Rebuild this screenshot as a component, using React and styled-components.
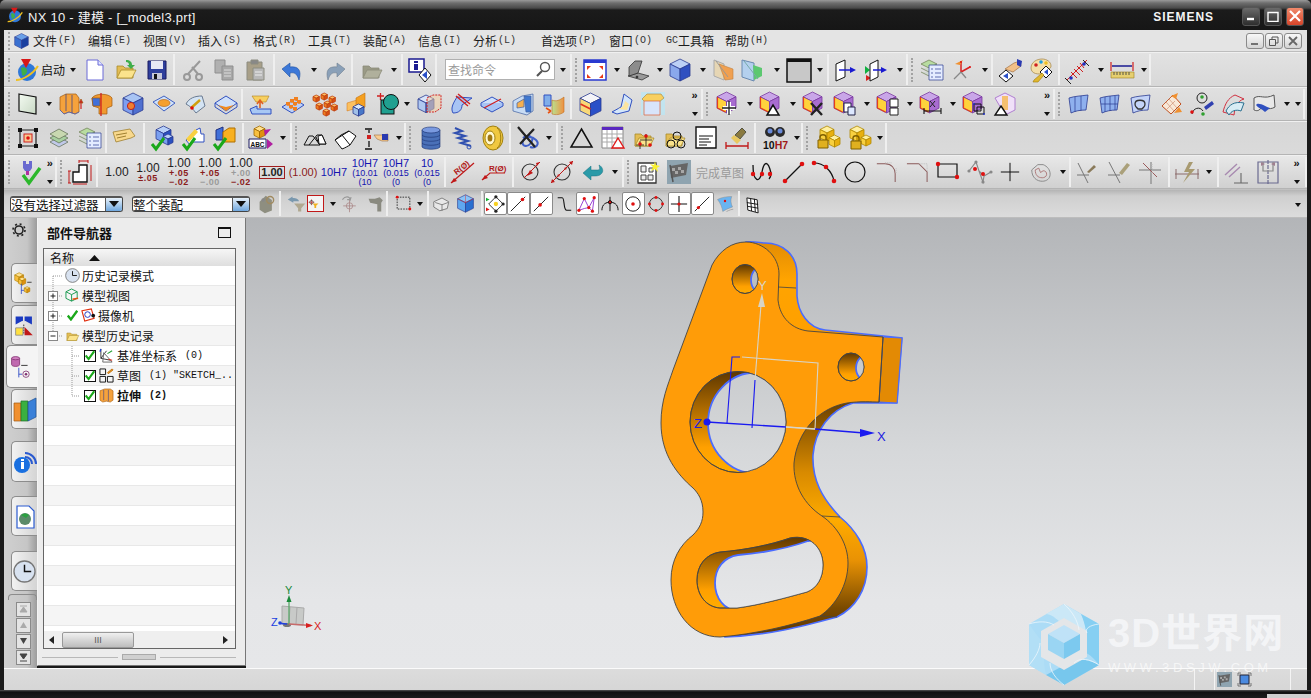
import React from 'react';
import styled, { createGlobalStyle } from 'styled-components';

const Global = createGlobalStyle`
  html, body { margin: 0; padding: 0; background: #1a1a1a; overflow: hidden; }
  * { box-sizing: border-box; }
`;
const CJK = `"Liberation Sans", "Noto Sans CJK SC", sans-serif`;

const Win = styled.div`width:1311px;height:698px;display:flex;flex-direction:column;background:#1a1a1a;position:relative;overflow:hidden;font-family:${CJK};color:#111;`;
const TitleBar = styled.div`height:30px;flex:none;display:flex;align-items:center;padding:0 7px 0 7px;color:#f2f2f2;font-size:13px;background:linear-gradient(#9a9a9a 0,#6e6e6e 3px,#4a4a4a 8px,#1b1b1b 10px,#161616 100%);border-radius:5px 5px 0 0;`;
const TitleText = styled.span`margin-left:5px;margin-top:2px;letter-spacing:.25px;flex:1;`;
const Brand = styled.span`font-weight:700;font-size:12px;letter-spacing:.95px;color:#f4f4f4;margin:3px 24px 0 0;`;
const WinBtn = styled.div`width:18px;height:19px;margin:2px 0 0 4px;border-radius:3px;display:flex;align-items:center;justify-content:center;border:1px solid #555;background:${p=>p.$close?'linear-gradient(#f08a6c,#d8452a)':'linear-gradient(#6a6a6a,#2e2e2e)'};`;
const Frame = styled.div`flex:1;display:flex;flex-direction:column;margin:0 4px;min-height:0;`;

const MenuBar = styled.div`height:22px;flex:none;display:flex;align-items:center;background:#e4e4e4;padding-left:4px;border-bottom:1px solid #bdbdbd;font-size:12px;`;
const MenuGrip = styled.div`width:3px;height:18px;border-left:2px dotted #a8a8a8;margin-right:2px;`;
const MenuIcon = styled.div`width:15px;height:16px;margin:0 4px 0 1px;`;
const MenuItem = styled.span`display:flex;align-items:center;white-space:nowrap;width:${p=>p.$w||41}px;margin-left:${p=>p.$ml??14}px;color:#1c1c1c;`;
const Key = styled.span`font:10px "Liberation Mono",monospace;margin-left:1px;color:#333;`;
const MdiBtns = styled.div`margin-left:auto;display:flex;gap:1px;padding-right:5px;`;
const MdiBtn = styled.div`width:18px;height:16px;border:1px solid #8a8a8a;border-radius:3px;background:linear-gradient(#f8f8f8,#d4d4d4);display:flex;align-items:center;justify-content:center;`;

const Row = styled.div`flex:none;height:${p=>p.$h}px;display:flex;padding-left:1px;background:${p=>p.$bg};border-top:1px solid ${p=>p.$top||'#f0f0f0'};border-bottom:1px solid ${p=>p.$bot||'#b4b4b4'};`;
const Group = styled.div`flex:none;width:${p=>p.$w}px;display:flex;align-items:center;position:relative;border-right:${p=>p.$open?'0':'2px solid #efefef'};margin:1px 0;`;
const Grip = styled.div`flex:none;width:${p=>p.$w}px;height:24px;padding-left:3px;display:flex;&::before{content:"";width:3px;border-left:2px dotted #a2a2a2;}`;
const Btn = styled.div`flex:none;width:${p=>p.$w}px;height:26px;display:flex;align-items:center;justify-content:center;`;
const Box = styled.div`flex:none;width:23px;height:23px;display:flex;align-items:center;justify-content:center;background:${p=>p.$box?'#fff':'transparent'};border:1px solid ${p=>p.$box?'#8a8a8a':'transparent'};border-radius:2px;`;
const RedBox = styled.div`flex:none;width:17px;height:17px;display:flex;align-items:center;justify-content:center;background:#f4f4f4;border:1.5px solid #c01818;`;
const Caret = styled.div`flex:none;width:${p=>p.$w||12}px;height:24px;display:flex;align-items:center;justify-content:center;&::before{content:"";border:3.5px solid transparent;border-top:4px solid #111;border-bottom:0;}`;
const Space = styled.div`flex:none;width:${p=>p.$w}px;`;
const Stack = styled.div`flex:none;width:${p=>p.$w||12}px;height:30px;display:flex;flex-direction:column;align-items:center;justify-content:space-between;padding:1px 0 3px;font:bold 11px "Liberation Sans",sans-serif;line-height:11px;&::after{content:"";border:3.5px solid transparent;border-top:4px solid #111;border-bottom:0;}`;
const Label = styled.div`flex:none;width:${p=>p.$w}px;font-size:12px;text-align:center;color:${p=>p.$c||'#111'};white-space:nowrap;`;
const Search = styled.div`flex:none;width:110px;height:21px;background:#fff;border:1px solid #b0b0b0;display:flex;align-items:center;justify-content:space-between;padding:0 2px 0 2px;font-size:12px;color:#9a9a9a;`;
const Dim = styled.div`flex:none;width:31px;display:flex;flex-direction:column;align-items:center;font:12px "Liberation Sans",sans-serif;line-height:12px;color:${p=>p.$c||'#222'};`;
const DimSmall = styled.span`font-size:11px;`;
const DimSub = styled.span`font:${p=>p.$thin?'':'bold '}9px "Liberation Sans",sans-serif;line-height:9px;letter-spacing:${p=>p.$thin?'0':'.5px'};white-space:nowrap;color:${p=>p.$c||'#8a1c1c'};`;
const DimBox = styled.span`border:1.5px solid #a01c1c;padding:0 1px;font-size:11px;line-height:11px;font-weight:700;`;
const Sel = styled.div`flex:none;width:${p=>p.$w}px;margin-left:${p=>p.$ml}px;height:16px;display:flex;align-items:center;background:#fff;border:1px solid #444;border-top:2px solid #555;border-radius:3px;font-size:12.5px;justify-content:space-between;overflow:hidden;`;
const SelBtn = styled.div`width:17px;height:100%;display:flex;align-items:center;justify-content:center;background:linear-gradient(#e8f2fb,#6fa7de);border-left:1px solid #555;&::before{content:"";border:5px solid transparent;border-top:6px solid #111;border-bottom:0;}`;

const Main = styled.div`flex:1;display:flex;min-height:0;`;
const Rail = styled.div`width:33px;flex:none;display:flex;flex-direction:column;align-items:flex-end;background:linear-gradient(90deg,#d0d0d0,#c6c6c6 70%,#9c9c9c);`;
const Gear = styled.div`width:30px;height:22px;margin-top:3px;display:flex;justify-content:center;align-self:flex-start;`;
const Tab = styled.div`height:${p=>p.$h||40}px;width:${p=>p.$active?31:26}px;margin-top:${p=>p.$mt||0}px;border:1px solid #8c8c8c;border-right:0;border-radius:5px 0 0 5px;display:flex;align-items:center;justify-content:center;background:${p=>p.$active?'#f4f4f4':'linear-gradient(90deg,#f2f2f2,#d4d4d4)'};`;
const Notch = styled.div`width:29px;height:6px;margin-top:3px;border:1px solid #8c8c8c;border-bottom:0;border-radius:4px 4px 0 0;align-self:flex-end;`;
const ScrollBtn = styled.div`width:15px;height:15px;margin:${p=>p.$mt||1}px 6px 0 0;background:#e4e4e4;border:1px solid #8a8a8a;display:flex;align-items:center;justify-content:center;`;

const Panel = styled.div`width:209px;flex:none;background:#ececec;border-right:1px solid #777;border-bottom:1px solid #777;margin-bottom:2px;padding:0 0 0 5px;display:flex;flex-direction:column;border-left:1px solid #f4f4f4;`;
const PanelHead = styled.div`height:30px;flex:none;display:flex;align-items:center;justify-content:space-between;padding:0 14px 2px 4px;font-weight:700;font-size:13px;`;
const MaxBox = styled.div`width:13px;height:11px;border:1.5px solid #111;border-top-width:2px;`;
const TreeBox = styled.div`width:193px;height:401px;flex:none;background:#fff;border:1px solid #666;display:flex;flex-direction:column;overflow:hidden;`;
const TreeHead = styled.div`height:17px;flex:none;background:linear-gradient(#f6f6f6,#dedede);display:flex;align-items:center;padding-left:6px;font-size:12px;gap:15px;`;
const TreeRows = styled.div`flex:1;overflow:hidden;`;
const TreeRow = styled.div`height:20px;display:flex;align-items:center;background:${p=>p.$alt?'#f5f5f5':'#fff'};border-bottom:1px solid #e8e8e8;font-size:12px;white-space:nowrap;overflow:hidden;font-weight:${p=>p.$bold?700:400};`;
const Mono = styled.span`font:${p=>p.$bold?'bold ':''}10px "Liberation Mono",monospace;margin-left:8px;`;
const HBar = styled.div`height:17px;flex:none;display:flex;align-items:center;background:#efefef;padding:0 7px 0 5px;`;
const Thumb = styled.div`width:72px;height:16px;margin:0 auto 0 8px;border:1px solid #999;border-radius:2px;background:linear-gradient(#f0f0f0,#bdbdbd);display:flex;align-items:center;justify-content:center;font-size:9px;color:#555;`;
const Tri = styled.div`border:4px solid transparent;${p=>p.$r?'border-left:5px solid #222;border-right:0;':'border-right:5px solid #222;border-left:0;'}`;
const Sash = styled.div`display:flex;align-items:center;gap:4px;height:17px;margin-left:-1px;`;
const SashLine = styled.div`width:${p=>p.$w}px;height:1px;background:#b8b8b8;`;
const SashGrip = styled.div`width:34px;height:6px;background:#d0d0d0;border:1px solid #aaa;`;

const Canvas = styled.div`flex:1;min-width:0;background:linear-gradient(#b3b5b8 0%,#d6d8da 52%,#e5e6e8 85%,#e6e7e9 100%);`;
const View = styled.svg`display:block;width:100%;height:100%;`;
const Status = styled.div`height:22px;flex:none;display:flex;background:linear-gradient(#dcdcdc,#d6d6d6);border-top:1px solid #fbfbfb;justify-content:flex-end;`;
const StatusCell = styled.div`width:${p=>p.$w}px;border-left:1px solid #f4f4f4;display:flex;align-items:center;gap:5px;padding-left:2px;`;
const StatusEnd = styled.div`width:17px;border-left:1px solid #f4f4f4;`;
const Bottom = styled.div`height:8px;flex:none;background:linear-gradient(#555 0,#111 2px,#1c1c1c 100%);display:flex;justify-content:flex-end;`;
const BottomEdge = styled.div`width:44px;height:4px;margin-top:4px;background:#cfcfcf;`;
const WaterMark = styled.div`position:absolute;left:1028px;top:603px;display:flex;gap:8px;pointer-events:none;`;
const WaterText = styled.div`display:flex;flex-direction:column;margin-top:9px;`;
const WaterBig = styled.div`font:bold 40px/42px ${CJK};letter-spacing:1px;color:rgba(246,247,249,.85);white-space:nowrap;`;
const WaterSmall = styled.div`font:13px/14px "Liberation Sans",sans-serif;letter-spacing:3.6px;margin-top:7px;color:rgba(252,252,252,.72);white-space:nowrap;`;
const Stretch = styled.div`flex:1;display:flex;justify-content:flex-end;padding-right:4px;align-items:flex-end;`;

const Cube = ({x=0,y=0,s=1,t='#c6d8f8',l='#8fb0ee',r='#3f5fc8',k='#2a3a90'}) => (
  <g transform={`translate(${x} ${y}) scale(${s})`} stroke={k} strokeWidth={.8/s} strokeLinejoin="round">
    <path d="M10 0l10 5-10 5L0 5z" fill={t}/><path d="M0 5l10 5v12L0 17z" fill={l}/><path d="M10 10l10-5v12l-10 5z" fill={r}/>
  </g>
);
const Check = ({x=0,y=0,s=1}) => <path transform={`translate(${x} ${y}) scale(${s})`} d="M1 7l4 5 8-11" fill="none" stroke="#1aa81a" strokeWidth="3"/>;
const Fold = ({g}) => (<g stroke={g?'#8a8a78':'#a88a2a'} strokeWidth=".8"><path d="M3 20V8h6l2 2h8v10z" fill={g?'#9a9a86':'#e3bd55'}/><path d="M3 20l4-8h15l-4 8z" fill={g?'#b0b09c':'#fbe38c'}/></g>);
const Pt = ({x,y,c='#e01010',r=1.8}) => <circle cx={x} cy={y} r={r} fill={c}/>;
const PCube = ({children}) => (<g><Cube x={1} y={0} s={.95} t="#c9a6e8" l="#ffd23c" r="#a86cd0" k="#7a3aa0"/><path d="M1.500 5v11l8 4" stroke="#e2401c" strokeWidth="1.2" fill="none"/>{children}</g>);
const Surf = ({c='#8fb0ee'}) => <path d="M3 6c6-2 12-2 19-3l-2 15c-6 0-11 1-15 3z" fill={c} stroke="#2a3a90" strokeWidth=".8"/>;

const I = {
  globe:<g><circle cx="12" cy="14" r="9" fill="#2f78d8"/><path d="M6 10c3-2 7 1 6 4s-4 5-5 3z" fill="#3fae4a"/><path d="M1 22C8 22 18 16 23 8" stroke="#f0c020" strokeWidth="2" fill="none"/><path d="M6 1h10l-5 9z" fill="#d81818"/></g>,
  doc:<g><path d="M4 2h11l5 5v15H4z" fill="#fff" stroke="#6a6ad8"/><path d="M15 2v5h5" fill="#dfe4ff" stroke="#6a6ad8"/></g>,
  open:<g><Fold/><path d="M12 2c4 0 6 2 6 5h3l-4 4-4-4h2c0-2-1-3-3-3z" fill="#3fae4a"/></g>,
  save:<g><path d="M3 3h18v18H3z" fill="#2f3f9c" stroke="#1a1a60"/><path d="M6 3h12v8H6z" fill="#e8e8f4"/><path d="M7 15h10v6H7z" fill="#c8c8d8"/><path d="M9 16h3v5H9z" fill="#111"/></g>,
  scissors:<g stroke="#999" fill="none" strokeWidth="2"><circle cx="6" cy="19" r="3"/><circle cx="18" cy="19" r="3"/><path d="M7 16L19 3M17 16L11 9"/></g>,
  copy:<g stroke="#8f8f8f" fill="#b0b0b0"><path d="M2 2h10v13H2z"/><path d="M9 8h11v14H9z" fill="#a8a8a8"/><path d="M11 12h7M11 15h7M11 18h7" stroke="#ddd"/></g>,
  paste:<g stroke="#8c8c80" fill="#a89f88"><path d="M3 4h15v18H3z"/><path d="M7 2h7v4H7z" fill="#888"/><path d="M9 10h11v12H9z" fill="#b8b8b8"/><path d="M11 14h7M11 17h7" stroke="#eee"/></g>,
  undo:<path d="M2 11l8-6v4c8-1 12 3 9 13-2-6-4-8-9-7v4z" fill="#3c78d8" stroke="#2050a0" strokeWidth=".6"/>,
  redo:<path d="M22 11l-8-6v4C6 8 2 12 5 22c2-6 4-8 9-7v4z" fill="#8aa0b8" stroke="#708090" strokeWidth=".6"/>,
  foldg:<Fold g/>,
  info:<g><path d="M1 1h15v13H1z" fill="#fff" stroke="#1a1a90" strokeWidth="1.5"/><path d="M6 3h4v2H6zM6 6h4v6H6z" fill="#1a1a90"/><path d="M17 10l6 7-6 7-6-7z" fill="#fff" stroke="#111"/><path d="M19 13l-5 4 5 4z" fill="#2a50c8"/></g>,
  fit:<g><path d="M1 2h22v20H1z" fill="#fff" stroke="#2a3ad0" strokeWidth="1.5"/><path d="M1 2h22v3H1z" fill="#2a3ad0"/><path d="M4 8h4L4 12zM20 8h-4l4 4zM4 20h4l-4-4zM20 20h-4l4-4z" fill="#e83818"/></g>,
  shade:<g stroke="#333" strokeWidth=".8"><path d="M2 18l14 4 7-4-11-3z" fill="#9a9a9a"/><path d="M3 18V9l6-6h7l-4 12z" fill="#8c8c8c"/><circle cx="11" cy="19" r="1" fill="#222"/></g>,
  cube:<Cube x={1} y={1} t="#bcd0f6" l="#8aa8ec" r="#3050c0"/>,
  clipo:<g><path d="M3 2l10 4v16L3 18z" fill="#e6d6b4" stroke="#aaa"/><path d="M8 6l14 5v10l-8 1z" fill="#f0a050" stroke="#c08040" strokeWidth=".6"/><path d="M5 3l12 16" stroke="#999"/></g>,
  clipb:<g><path d="M2 2l12 3v18L2 19z" fill="#b4d0ee" stroke="#6a8ab0"/><path d="M13 7l9 3v8l-8 4z" fill="#5cc870"/><path d="M4 3l14 18" stroke="#7aa"/></g>,
  black:<g><path d="M0 1h24v23H0z" fill="#c8c8c8" stroke="#111" strokeWidth="1.5"/><path d="M0 1h24v3H0z" fill="#111"/></g>,
  thru:<g><path d="M3 6l9-4v17l-9 4z" fill="#fff" stroke="#111"/><path d="M6 12h13" stroke="#1a1ad0" strokeWidth="1.5"/><path d="M17 9l6 3-6 3z" fill="#1a1ad0"/></g>,
  thru2:<g><path d="M1 8l5 4-5 4z" fill="#10b040"/><path d="M2 17l5 3-5 3z" fill="#d82020"/><path d="M6 6l8-4v17l-8 4z" fill="#fff" stroke="#111"/><path d="M9 12h10" stroke="#1a1ad0" strokeWidth="1.5"/><path d="M17 9l6 3-6 3z" fill="#1a1ad0"/></g>,
  layers:<g stroke="#5a6a50" strokeWidth=".7"><path d="M3 16l9 5 9-5-9-5z" fill="#c0c8e8"/><path d="M3 12l9 5 9-5-9-5z" fill="#a8d0a0"/><path d="M3 8l9 5 9-5-9-5z" fill="#c8d8b0"/></g>,
  laylist:<g stroke="#6a7a50" strokeWidth=".7"><path d="M1 6l8-4 8 4-8 4z" fill="#b8dca0"/><path d="M1 10l8 4 8-4M1 14l8 4 8-4" fill="#d0d8d0"/><path d="M9 7h14v15H9z" fill="#e4ecff" stroke="#2a3a90"/><path d="M11 11h2M15 11h6M11 15h2M15 15h6M11 19h2M15 19h6" stroke="#2a3a90"/></g>,
  triad:<g fill="none"><path d="M10 14l9-5M10 14v-10" stroke="#d82020" strokeWidth="1.5"/><path d="M10 14L3 21M10 14l5 6" stroke="#888" strokeWidth="1.3"/><path d="M4 6l8-4-3 5z" fill="#f09030"/><Pt x={10} y={4} r={1}/><Pt x={19} y={9} r={1}/></g>,
  hand:<g><path d="M7 11l9-6 6-2 1 5-8 6z" fill="#f2c088" stroke="#a07040" strokeWidth=".7"/><path d="M19 1l5 2-1 6-4-2z" fill="#2a3ab0"/><path d="M8 12l7 6-7 6-7-6z" fill="#fff" stroke="#111"/><path d="M10 15l-5 3 5 3z" fill="#2a50c8"/></g>,
  palette:<g><path d="M2 10C2 4 8 1 13 1s9 3 9 7c0 3-3 3-5 3-3 0-3 3-3 4-4 2-12 1-12-5z" fill="#f4dfa8" stroke="#a08040" strokeWidth=".7"/><Pt x={7} y={7} c="#d02020"/><Pt x={12} y={4} c="#20a0e0"/><Pt x={17} y={5} c="#f0c020"/><path d="M17 8l6 6-6 6-6-6z" fill="#fff" stroke="#111"/><path d="M19 11l-4 3 4 3z" fill="#2a50c8"/><path d="M5 22l8-7 2 2-6 7H4z" fill="#e0b830" stroke="#a07808" strokeWidth=".6"/></g>,
  antenna:<g><path d="M2 22L22 2" stroke="#d02020"/><path d="M6 14l6 6M9 11l6 6M12 8l6 6M15 5l4 5" stroke="#d02020"/><path d="M0 20l6 6M18 2l6 6" stroke="#222"/><Pt x={6} y={20} c="#2030c0"/><Pt x={19} y={6} c="#2030c0"/></g>,
  ruler:<g><path d="M1 4v9M23 4v9" stroke="#d02020" strokeWidth="1.2"/><path d="M2 8h20" stroke="#1a1a90" strokeWidth="1.5"/><path d="M1 14h23v6H1z" fill="#e6cf70" stroke="#a08020" strokeWidth=".6"/><path d="M4 14v3M7 14v3M10 14v3M13 14v3M16 14v3M19 14v3" stroke="#554"/></g>,
  plane:<g><path d="M3 2l17 3v17L3 19z" fill="url(#pl)" stroke="#111" strokeWidth="1.2"/></g>,
  extrude:<g stroke="#a05a10" strokeWidth=".7"><path d="M1 5l6-3h10l3 4v14l-4 2-6-2-5 2-4-4z" fill="#f5a23c"/><path d="M7 2v17M13 3v18" stroke="#2a3a90"/><path d="M1 18l4 4 5-2 6 2 4-2" stroke="#4060d0" fill="none"/><path d="M22 17v-8" stroke="#d02020" strokeWidth="1.2"/><path d="M20 11l2-4 2 4z" fill="#d02020"/></g>,
  revolve:<g stroke="#a05a10" strokeWidth=".7"><path d="M2 6c3-5 17-5 20 0v8l-5 2v6H9v-6l-6-2z" fill="#f09a30"/><path d="M2 6h8v8H3z" fill="#3f6fd8"/><path d="M11 1v23" stroke="#d02020" strokeWidth="1.3"/></g>,
  hole:<g><Cube x={2} y={1} t="#a8c4f4" l="#7f9ff0" r="#5070d0"/><circle cx="10" cy="14" r="3.600" fill="#f08030" stroke="#c02020"/></g>,
  boss:<g><path d="M1 10l11-6 11 7-11 8z" fill="#cfe2fa" stroke="#4060c0"/><ellipse cx="12" cy="11" rx="6" ry="3.500" fill="#f5a030" stroke="#b06010" strokeWidth=".6"/></g>,
  sweep:<g><path d="M3 12c3-6 9-8 16-8l3 10-9 7c-3-4-6-7-10-9z" fill="#d4e4f4" stroke="#6a7a90"/><path d="M8 16l9-8" stroke="#d0a010" strokeWidth="2.4"/><Pt x={9} y={16}/></g>,
  shell:<g><path d="M1 11l11-7 11 7-11 8z" fill="#cfe0fa" stroke="#3050c0"/><path d="M4 13l8 6 8-6-8 2z" fill="#f08a20"/><path d="M1 11v4l11 7 11-7v-4" fill="none" stroke="#3050c0"/></g>,
  offset:<g><path d="M3 4h17l-3 6H7z" fill="#f7d060" stroke="#b08020" strokeWidth=".6"/><path d="M11 16V9M8 12l3-4 3 4" stroke="#e06020" strokeWidth="1.6" fill="none"/><path d="M1 17l7-3v3l14 0v5H3z" fill="#a8c8f4" stroke="#3050c0"/></g>,
  dots:<g><path d="M1 15l13-8 9 6-12 8z" fill="#bcd0f6" stroke="#3050c0"/>{[[7,13],[11,10],[15,8],[10,16],[14,13],[18,11],[14,18]].map(([x,y],i)=><path key={i} d={`M${x-2} ${y-3}h4v3l-2 1-2-1z`} fill="#f08020"/>)}</g>,
  cubes:<g>{[[1,3],[9,1],[17,4],[4,11],[12,9],[19,12],[11,17]].map(([x,y],i)=><Cube key={i} x={x} y={y} s={.32} t="#ffc060" l="#f08020" r="#d85010" k="#c04010"/>)}</g>,
  trim:<g><path d="M3 11l10-3v8l-10 3z" fill="#fbc060" stroke="#d07010" strokeWidth=".5"/><path d="M12 6l9-5v14l-9 5z" fill="#f5a020" stroke="#c07010" strokeWidth=".6"/><Cube x={9} y={12} s={.55} t="#d8e8f8" l="#a0c0e8" r="#4878c8"/></g>,
  unite:<g><path d="M1 4h7M4.500 1v7" stroke="#d02020" strokeWidth="1.3"/><rect x="5" y="8" width="13" height="14" fill="#20a090" stroke="#111"/><circle cx="15" cy="10" r="7.500" fill="#20a090" stroke="#111"/></g>,
  dashbox:<g><Cube x={0} y={3} s={.8} t="#d8e4fa" l="#b0c8f0" r="#5070d0"/><path d="M9 6l6-3h8v13l-6 4H9z" fill="#f5d0a0" fillOpacity=".5" stroke="#d02020" strokeDasharray="2 1"/></g>,
  cut:<g><path d="M4 21c-3-5 1-11 4-16l15 1-10 7c0 5-3 8-9 8z" fill="#a8c4f4" stroke="#3050c0"/><path d="M9 2l12 10M7 4l12 10" stroke="#d02020" strokeWidth="1.4"/></g>,
  slash:<g><path d="M1 11l11-6 11 6-11 6z" fill="#cfe0fa" stroke="#3050c0"/><path d="M1 11v3l11 6 11-6v-3" fill="#a8c4f4" stroke="#3050c0"/><path d="M4 16L21 7" stroke="#d02020" strokeWidth="1.3"/></g>,
  shell2:<g stroke="#4060a0" strokeWidth=".7"><path d="M2 9l9-5 11-2v17l-6 4-14-4z" fill="#c8dcf4"/><path d="M6 11l7-4v8l-7 1z" fill="#f5b050"/><path d="M13 4h7v16h-5z" fill="#3f78d0"/></g>,
  surf2:<g><path d="M2 3h7v11H2z" fill="#80aeea" stroke="#3050c0"/><path d="M10 8c4 2 8 0 12-3v15c-4 3-8 3-12 2z" fill="url(#gy)" stroke="#c07020" strokeWidth=".6"/><path d="M4 16l5 3M6 21l3-2" stroke="#e85010" strokeWidth="1.6"/></g>,
  cubeshade:<g><Cube x={1} y={1} s={1.05} t="#f4f4f8" l="#f8d878" r="#2a50c8"/><path d="M1.500 12l10 5" stroke="#e03020" strokeWidth="1.6"/></g>,
  curl:<g><path d="M2 20l9-5 3-13 8 6-3 11-12 3z" fill="#d4e6fa" stroke="#3050c0"/><path d="M8 17c4-1 6-3 7-8l4 3-2 6z" fill="#fbe4a0"/></g>,
  boxtop:<g><path d="M0 0h24v23H0z" fill="#b8e8f8" fillOpacity=".7"/><path d="M1 7l5-5h14l3 4-5 4H4z" fill="#f8d060" stroke="#a08040" strokeWidth=".6"/><path d="M3 9h16v14H3z" fill="#d8e4fa" stroke="#e06030" strokeWidth=".7"/></g>,
  pmove:<PCube><path d="M13 10v12M7 16h12" stroke="#fff" strokeWidth="4"/><path d="M13 9v14M6 16h14" stroke="#222" strokeWidth="1.3"/></PCube>,
  pdelta:<PCube><path d="M14 13l6 10H8z" fill="#fff" stroke="#111" strokeWidth="1.5"/></PCube>,
  px:<PCube><path d="M9 11l11 12M20 11L9 23" stroke="#222" strokeWidth="2.4"/></PCube>,
  pcopy:<PCube><path d="M11 11h7v9h-7z" fill="#fff" stroke="#224"/><path d="M15 15h7v8h-7z" fill="#dde8ff" stroke="#224"/></PCube>,
  psplit:<PCube><path d="M14 7h8v8h-8zM14 16h8v7h-8z" fill="#fff" stroke="#222"/></PCube>,
  pdim:<PCube><path d="M11 9l5 6M16 9l-5 6" stroke="#222"/><path d="M5 19h17M5 16v6M22 16v6" stroke="#111" strokeWidth="1.1"/></PCube>,
  pxf:<PCube><path d="M12 12h7v7h-7z M15 15h7v7h-7z" fill="none" stroke="#111"/><Pt x={12} y={12} c="#2030c0" r={1}/><Pt x={22} y={22} c="#2030c0" r={1}/></PCube>,
  ptri:<g><path d="M2 6l10-5 10 5v12l-10 5z" fill="#f0e0f8" stroke="#b080d0"/><path d="M9 4h6v14H9z" fill="#f5c070"/><path d="M8 14l6 9H2z" fill="#fff" stroke="#111" strokeWidth="1.4"/></g>,
  s1:<g><Surf/><path d="M9 5v15M15 4v15" stroke="#2a3a90" strokeWidth=".7"/></g>,
  s2:<g><Surf/><path d="M8 5v15M13 4v15M18 4v14M4 12h17" stroke="#2a3a90" strokeWidth=".7"/></g>,
  s3:<g><Surf c="#c4d4f8"/><path d="M7 12c0-5 10-5 10 0 0 4-2 3-3 5H10c-1-2-3-1-3-5z" fill="none" stroke="#333" strokeWidth="1.3"/></g>,
  s4:<g><path d="M3 14L14 3l8 9-10 10z" fill="#f8e8d8" stroke="#c05020"/><path d="M7 10l8 9M10 7l8 9M12 5l-8 8M16 9l-8 8" stroke="#c07050" strokeWidth=".5"/><path d="M12 4l7-3-2 6zM15 21l8-1-3-5zM6 9L1 14" fill="#f09030"/></g>,
  s5:<g fill="none"><circle cx="12" cy="6" r="5" stroke="#222"/><Pt x={12} y={5} c="#30a030"/><path d="M2 22c1-6 8-8 11-3" stroke="#222"/><Pt x={2} y={20}/><Pt x={13} y={22} c="#30a030"/><path d="M14 15l8-6 2 3-8 6z" fill="#3040b0"/></g>,
  s6:<g fill="none"><path d="M2 20c2-8 5-14 12-17l9 4c-7 2-9 8-10 16z" stroke="#d03040"/><path d="M5 19c3-6 8-10 18-8l-3 8c-5-2-10 0-12 4z" fill="#d8ecf4" stroke="#2a7090"/></g>,
  s7:<g><path d="M2 6c6-4 10 2 20-3l1 12c-6 4-12-1-15 2-2 3-6 1-6 1z" fill="#e8e8e8" stroke="#555"/><path d="M5 12c4-1 9 3 13 4l-5 4c-3-3-7-4-9-7z" fill="#3050c0"/></g>,
  nodes:<g fill="none"><path d="M4 4h16v16H4z" stroke="#222" strokeWidth="1.2"/><rect x="8" y="8" width="8" height="8" fill="#f8c890" stroke="#d02020"/><Pt x={12} y={12} c="#e01010"/>{[[4,4],[20,4],[4,20],[20,20]].map(([x,y],i)=><rect key={i} x={x-2} y={y-2} width="4" height="4" fill="#111"/>)}</g>,
  tag:<g><path d="M1 6l17-3 5 7-4 2-15 4z" fill="#f8d88c" stroke="#a08030" strokeWidth=".8"/><path d="M4 9l11-2M5 12l9-2" stroke="#a08030"/></g>,
  chka:<g><Cube x={6} y={0} s={.75} t="#b8d0f8" l="#7a9ff0" r="#2a50c0"/><Cube x={13} y={8} s={.5} t="#b8d0f8" l="#7a9ff0" r="#2a50c0"/><Check x={1} y={11}/></g>,
  chkb:<g><path d="M5 14L15 4l4-2 1 6h3v8H12l-3 3z" fill="#fff" stroke="#3050c0"/><path d="M5 13L14 3l3 3L8 16z" fill="#f8d040"/><Check x={1} y={11}/></g>,
  chkc:<g><path d="M4 4l7-3v13H4z" fill="#4070d8" stroke="#203080"/><path d="M11 6l6-4h6v14h-12z" fill="#f8b020" stroke="#b07000"/><Check x={1} y={11}/></g>,
  abc:<g><Cube x={5} y={0} s={.55} t="#ffe08c" l="#f8c040" r="#e09010" k="#a06800"/><path d="M0 13h17v9H0z" fill="#fff" stroke="#1a1a60"/><text x="1.500" y="20.500" fontSize="6.500" fontWeight="700" fontFamily="Liberation Sans" fill="#111" textLength="14">ABC</text><path d="M15 4l7-1-6 7zM18 13l6 5-6 5z" fill="#b020a0"/></g>,
  ang1:<g fill="none" stroke="#111"><path d="M1 19h16L10 10H6zM6 19l8-10h5l4 9h-7l-3-7"/><path d="M15 10l4-1 4 9h-7z" fill="#fff"/></g>,
  ang2:<g fill="none" stroke="#111"><path d="M1 14l7 9c3-1 6-3 8-4l6-9-7-5-8 4z" fill="#fff"/><path d="M8 9l8 10M1 14l14-9"/></g>,
  handi:<g><path d="M0 3h7M0 23h7" stroke="#111" strokeWidth="1.5"/><path d="M4 4v3M4 15v6" stroke="#111" strokeWidth="1.3"/><rect x="2" y="9" width="4" height="4" fill="#d02020"/><path d="M9 9h7l7-1v7h-6l-5-2z" fill="#f8cc90" stroke="#a07040" strokeWidth=".6"/><path d="M17 8h6v6h-6z" fill="#2a3ab0"/></g>,
  coil:<g fill="#4a70b8" stroke="#1a3070" strokeWidth=".6"><path d="M3 4v17c2 3 16 3 18 0V4c-2 3-16 3-18 0z"/><ellipse cx="12" cy="4" rx="9" ry="3" fill="#7a9ae0"/><path d="M3 9c2 3 16 3 18 0M3 13c2 3 16 3 18 0M3 17c2 3 16 3 18 0" fill="none"/></g>,
  spring:<g fill="none" stroke="#3050b0" strokeWidth="2"><path d="M5 2l7 3-7 2 10 3-7 2 10 3-7 2 10 3"/><circle cx="19" cy="21" r="2" strokeWidth="1"/></g>,
  nut:<g><ellipse cx="12" cy="12" rx="10" ry="12" fill="#f0c840" stroke="#a08010"/><path d="M16 2c5 2 5 18 0 20" fill="none" stroke="#a08010"/><ellipse cx="9" cy="12" rx="5" ry="7" fill="#fff8d0" stroke="#a08010"/><ellipse cx="9" cy="12" rx="2.400" ry="3.600" fill="#a07810"/></g>,
  xspring:<g fill="none"><path d="M8 12c6-5 12 0 8 5s-10 3-8-2 9-5 13-1 0 9-6 7" stroke="#4060c8" strokeWidth="2"/><path d="M3 1l17 20M19 3L5 18" stroke="#222" strokeWidth="2.2"/></g>,
  tri:<path d="M11.500 3L22 21H1z" fill="none" stroke="#111" strokeWidth="1.5"/>,
  table:<g><path d="M1 1h21v21H1z" fill="#fff" stroke="#888"/><path d="M1 1h21v3H1z" fill="#5a28c0"/><path d="M1 8h21M1 12h21M1 16h21M6 4v18M11 4v18M16 4v18" stroke="#aaa"/><path d="M17 12l6 10H11z" fill="#fff" stroke="#e01818" strokeWidth="1.4"/></g>,
  fpts:<g><Fold/><path d="M8 14h12M14 8v12M4 19h8M8 15v8" stroke="#111" strokeWidth=".8"/><Pt x={14} y={10}/><Pt x={8} y={18}/><Pt x={18} y={19}/></g>,
  fcir:<g><Fold/><circle cx="14" cy="10" r="4" fill="none" stroke="#111"/><circle cx="8" cy="18" r="4" fill="none" stroke="#111"/><circle cx="18" cy="18" r="4" fill="none" stroke="#111"/></g>,
  note:<g><path d="M2 1h20v21H2z" fill="#fff" stroke="#111" strokeWidth="1.4"/><path d="M5 10h14M5 13h10M5 16h12M5 19h8" stroke="#111"/></g>,
  brush:<g><path d="M10 9L17 2l4 4-6 7z" fill="#8a7a40" stroke="#554"/><path d="M9 9l7 5-4 4-6-6z" fill="#e8c860"/><path d="M1 16v7M23 16v7M1 20h22" stroke="#c01818" strokeWidth="1.3"/></g>,
  bino:<g><circle cx="7" cy="6" r="5" fill="#2a2a2a"/><circle cx="17" cy="6" r="5" fill="#2a2a2a"/><circle cx="7" cy="5" r="2.500" fill="#6a8ad8"/><circle cx="17" cy="5" r="2.500" fill="#6a8ad8"/><text x="0" y="23" fontSize="10.500" fontWeight="700" fontFamily="Liberation Sans"><tspan fill="#111">10</tspan><tspan fill="#a01818">H7</tspan></text></g>,
  lock1:<g><Cube x={4} y={0} s={.7} t="#fff0a0" l="#f8d040" r="#e8b010" k="#b08800"/><Cube x={13} y={9} s={.55} t="#fff0a0" l="#f8d040" r="#e8b010" k="#b08800"/><path d="M2 14h10v8H2z" fill="#e0b020" stroke="#806000"/><path d="M4 14v-3c0-3 6-3 6 0v3" fill="none" stroke="#806000" strokeWidth="1.4"/></g>,
  lock2:<g><Cube x={3} y={0} s={.7} t="#fff0a0" l="#f8d040" r="#e8b010" k="#b08800"/><Cube x={14} y={9} s={.5} t="#fff0a0" l="#f8d040" r="#e8b010" k="#b08800"/><path d="M4 15h10v8H4z" fill="#e0b020" stroke="#806000"/><path d="M6 15v-3c0-3 6-3 6 0v3" fill="none" stroke="#806000" strokeWidth="1.4"/></g>,
  purpose:<g><path d="M5 1h3v3h3V1h3v7l-2 3H7L5 8z" fill="#6a6ad0"/><path d="M8 11h3v4H8z" fill="#b030a0"/><path d="M5 15l6 8 11-15" fill="none" stroke="#2bb82b" strokeWidth="3.4"/></g>,
  corner:<g fill="none"><path d="M5 22V12h6V5h8v17z" fill="#fff" stroke="#111" strokeWidth="1.4"/><path d="M11 1h9M11 0v3M20 0v3M1 23V11M0 11h3M0 23h3M5 24h14M23 5v16" stroke="#c01818"/></g>,
  rad1:<g><path d="M1 23L24 3" stroke="#c01818" strokeWidth="1.2"/><path d="M1 23l6-2-3-3z" fill="#c01818"/><text x="4" y="12" fontSize="8" fontWeight="700" fontFamily="Liberation Sans" fill="#b01818" transform="rotate(-38 10 10)">R(Ø)</text></g>,
  rad2:<g><path d="M1 20l8-7h15" stroke="#c01818" fill="none" strokeWidth="1.2"/><path d="M1 20l6-2-3-3z" fill="#c01818"/><text x="8" y="11" fontSize="8" fontWeight="700" fontFamily="Liberation Sans" fill="#b01818">R(Ø)</text></g>,
  dia1:<g><circle cx="11" cy="12" r="8" fill="none" stroke="#333" strokeWidth="1.1"/><path d="M5 18L21 2" stroke="#c01818"/><path d="M8 16l3-6 3 3zM21 2l-4 1 1 3z" fill="#c01818"/></g>,
  dia2:<g><circle cx="12" cy="12" r="8" fill="none" stroke="#333" strokeWidth="1.1"/><path d="M1 23L23 1" stroke="#c01818"/><path d="M1 23l4-1-3-3zM23 1l-4 1 3 3zM7 17l3-1-2-2zM17 7l-3 1 2 2z" fill="#c01818"/></g>,
  teal:<path d="M2 13l8-7v4h7c2 0 2-2 1-5 4 2 5 7 2 9-2 2-4 2-10 2v4z" fill="#2a9aa8" stroke="#187080" strokeWidth=".5"/>,
  newsk:<g><path d="M2 3h18v20H2z" fill="#fff" stroke="#333" strokeWidth="1.3"/><path d="M5 6h5v6H5zM13 8h4v4h-4zM5 15h5v5H5zM12 15h5v5h-5z" fill="#eee" stroke="#444"/><path d="M19 1l1 4 4 1-3 2 1 4-3-3-4 2 2-4-3-3 4 1z" fill="#f8f030"/></g>,
  flag:<g><rect x="0" y="0" width="24" height="24" fill="#8fa4b0"/><path d="M3 6l18-3-2 12-15 3z" fill="#666"/><path d="M5 8h3v3H5zM11 7h3v3h-3zM8 11h3v3H8zM14 10h3v3h-3z" fill="#a8a8a8"/><path d="M3 5l3 17" stroke="#555" strokeWidth="1.5"/></g>,
  profile:<g fill="none"><path d="M3 5c0 18 7 18 9 7s6-12 9 1c0 3-1 5-2 6" stroke="#111" strokeWidth="1.3"/><Pt x={3} y={14} r={2.2}/><Pt x={12} y={14} r={2.2}/><Pt x={20} y={14} r={2.2}/></g>,
  line:<g><path d="M4 21L21 4" stroke="#111" strokeWidth="1.2"/><Pt x={4} y={21} r={2.3}/><Pt x={21} y={4} r={2.3}/></g>,
  arc:<g><path d="M2 3c10 0 18 8 20 18" fill="none" stroke="#111" strokeWidth="1.2"/><Pt x={2} y={3} r={2.3}/><Pt x={14} y={7} r={2.3}/><Pt x={22} y={21} r={2.3}/></g>,
  circle:<circle cx="12" cy="12" r="10" fill="none" stroke="#111" strokeWidth="1.2"/>,
  fillet:<g fill="none"><path d="M2 3h9c7 0 11 5 11 11v9" stroke="#8a5a5a" strokeWidth="1.1"/><path d="M11 2h7M23 8v6" stroke="#bbb" strokeDasharray="1 1"/></g>,
  chamfer:<g fill="none"><path d="M1 3h13l9 9v11" stroke="#8a5a5a" strokeWidth="1.1"/><path d="M14 3h9v9" stroke="#bbb" strokeDasharray="1 1"/></g>,
  rect:<g><path d="M2 4h19v13H2z" fill="none" stroke="#111" strokeWidth="1.2"/><Pt x={2} y={4} r={2.2}/><Pt x={21} y={17} r={2.2}/></g>,
  poly:<g fill="none"><path d="M2 11L9 2l3 9 5 5 7-4M12 11l4 11 1-6M9 2l3 9" stroke="#888" strokeWidth="1.1"/><Pt x={9} y={2} c="#888" r={1.6}/><Pt x={2} y={11} c="#888" r={1.6}/><Pt x={24} y={12} c="#888" r={1.6}/><Pt x={16} y={22} c="#888" r={1.6}/><Pt x={8} y={9} r={2}/><Pt x={16} y={14} r={2}/></g>,
  plus:<path d="M12 1v22M1 12h22" stroke="#111" strokeWidth="1.2" fill="none"/>,
  heart:<g fill="none"><path d="M2 9l7-6h6c5 2 8 6 8 11 0 5-4 8-9 8-6 0-12-4-12-13z" stroke="#888" strokeWidth="1.1"/><path d="M6 9l4-2 2 5 3-2c3 0 4 2 4 4 0 3-3 4-5 4-5 0-8-3-8-9z" stroke="#a87070"/></g>,
  t1:<g><path d="M3 3l10 20M2 15h12" stroke="#777"/><path d="M12 12l7-7 2 2-7 6z" fill="#8a7a5a"/></g>,
  t2:<g><path d="M2 2l11 21M1 15h12" stroke="#777"/><path d="M12 13l8-10 3 2-8 10z" fill="#aaa07a"/></g>,
  t3:<g><path d="M1 10h22M13 2v22" stroke="#777"/><path d="M5 3l14 14" stroke="#9a5a5a"/><path d="M14 4v10" stroke="#bbb" strokeDasharray="1 1"/></g>,
  bolt:<g><path d="M0 14h24M1 9v10M23 9v10" stroke="#8a6a6a"/><path d="M14 2l-5 10h5l-6 11 12-14h-6l4-7z" fill="#a89a70"/></g>,
  paral:<g><path d="M1 15L13 4M5 17L16 7" stroke="#a88ab0" strokeWidth="1.4"/><path d="M17 13v10M10 23h14" stroke="#666" strokeWidth="1.1"/></g>,
  brack:<g fill="none" stroke="#6a6a90" strokeWidth="1.2"><path d="M3 2h20v21H3z"/><path d="M13 0v24" strokeDasharray="4 1"/><path d="M8 2v9h10V2" stroke="#888"/><path d="M6 2l4 2-4 2zM20 2l-4 2 4 2z" fill="#a08090" stroke="none"/></g>,
  chain:<g><path d="M3 10l7-7 7 5v12l-8 3-6-4z" fill="#8e8e80"/><circle cx="15" cy="8" r="4" fill="none" stroke="#a08a60" strokeWidth="1.6"/><Pt x={7} y={8} c="#888" r={2}/></g>,
  f1:<g><path d="M1 7l6-4v2c5 0 8 2 8 4H8v2z" fill="#7a98ae"/><path d="M9 12h14l-5 6v4h-4v-4z" fill="#b0a890"/></g>,
  f2:<g><path d="M6 4v10M1 9h10" stroke="#c01818"/><circle cx="6" cy="9" r="3" fill="none" stroke="#222"/><path d="M8 11h10l-4 4v4h-3v-4z" fill="#f0b020"/></g>,
  f3:<g fill="none"><path d="M12 7v16M4 15h16" stroke="#a88"/><circle cx="12" cy="15" r="4" stroke="#a88"/><path d="M3 7c4-5 9-4 10 0l1-3M13 7l-4 0" stroke="#999" strokeWidth="1.5"/></g>,
  f4:<g><path d="M2 6h8l6-2 4 4-2 3v11h-5v-9l-9-2z" fill="#8a8a80"/></g>,
  selrect:<g><path d="M4 4h16v15H4z" fill="none" stroke="#111" strokeDasharray="2 1.4"/><Pt x={4} y={4}/><Pt x={20} y={19}/></g>,
  cylw:<g><path d="M1 9l11-5 9 5-2 9-10 3-8-5z" fill="#e8e8e8" stroke="#666"/><path d="M3 10l9 3 8-3M12 13v8" stroke="#666" fill="none"/></g>,
  cubered:<g><Cube x={2} y={1} t="#8ac4f8" l="#60a8f0" r="#2a70d0"/><path d="M2 6l10 5 10-5M12 1v10" stroke="#e03030" fill="none" strokeWidth=".6"/></g>,
  sn1:<g><path d="M11 2l8 8-8 8-8-8z" fill="#fff" stroke="#222"/><Pt x={11} y={2} c="#222"/><Pt x={19} y={10} c="#222"/><Pt x={11} y={18} c="#222"/><Pt x={11} y={10} c="#f8d020" r={2.4}/><path d="M0 3l4 2-4 2z" fill="#10b030"/><path d="M0 14l4 2-4 2z" fill="#e01010"/></g>,
  sn2:<g><path d="M2 18L18 2" stroke="#111"/><Pt x={15} y={5} r={2}/></g>,
  sn3:<g><path d="M2 18L18 2" stroke="#111"/><Pt x={9} y={11} r={2}/></g>,
  sn4:<path d="M3 3h5c3 0 1 14 5 14h5" fill="none" stroke="#111" strokeWidth="1.2"/>,
  sn5:<g fill="none"><path d="M1 17l6-13 5 10 6-11-2 15-4-4-5 1z" stroke="#9030d0"/><Pt x={1} y={17} r={1.8}/><Pt x={7} y={4} r={1.8}/><Pt x={12} y={14} r={1.8}/><Pt x={18} y={3} r={1.8}/><Pt x={16} y={18} r={1.8}/></g>,
  sn6:<g fill="none" stroke="#111" strokeWidth="1.1"><path d="M10 2v16M1 17c0-7 5-9 9-9s9 2 9 9"/><Pt x={10} y={8} r={1.8}/></g>,
  sn7:<g><circle cx="10" cy="10" r="8" fill="none" stroke="#111"/><Pt x={10} y={10} r={2}/></g>,
  sn8:<g><circle cx="11" cy="11" r="8" fill="none" stroke="#111"/><Pt x={11} y={3} r={1.8}/><Pt x={11} y={19} r={1.8}/><Pt x={3} y={11} r={1.8}/><Pt x={19} y={11} r={1.8}/></g>,
  sn9:<g><path d="M10 1v18M1 10h18" stroke="#111" strokeWidth="1.2"/><Pt x={10} y={10} r={1.8}/></g>,
  sn10:<g><path d="M2 18L18 2" stroke="#111"/><Pt x={6} y={14} r={1.8}/></g>,
  sn11:<g><path d="M2 6c6-3 12-4 19-4-2 4-1 10 1 14-6 2-10 4-13 6-1-6-3-11-7-16z" fill="#6ab4f0" stroke="#888" strokeWidth=".6"/><Pt x={12} y={8} r={1.6}/><path d="M14 22c4-2 7-3 9-3" stroke="#999"/></g>,
  grid:<g><path d="M2 2l11 2 1 14-11-3z" fill="#fff" stroke="#111"/><path d="M6 3l1 13M10 3l1 14M2 7l12 2M3 11l11 2" stroke="#111"/></g>,
  navAsm:<g><Cube x={1} y={1} s={.6} t="#ffe08c" l="#f8c040" r="#e09010" k="#b08000"/><Cube x={6} y={7} s={.5} t="#ffe08c" l="#f8c040" r="#e09010" k="#b08000"/><path d="M18 14h6" stroke="#111"/><path d="M10 16v14M10 25h4" stroke="#1a3ac0" fill="none"/><Cube x={14} y={20} s={.38} t="#ffe08c" l="#f8c040" r="#e09010" k="#b08000"/></g>,
  navCon:<g><path d="M2 3l9 6V3zM22 3l-9 6V3z M2 3v10l9-5zM22 3v10l-9-5z" fill="#1a3ac0"/><path d="M12 13v12" stroke="#111" strokeDasharray="2 1"/><path d="M2 17h9v9H2z" fill="#ffe040" stroke="#888"/><path d="M13 16l10 10H13z" fill="#c01818"/></g>,
  navPart:<g><path d="M2 4v8c0 3 10 3 10 0V4" fill="#c06ab0" stroke="#803070"/><ellipse cx="7" cy="4" rx="5" ry="2" fill="#d080c0" stroke="#803070"/><path d="M14 13h8" stroke="#111"/><path d="M11 16v12M11 24h4" stroke="#1a3ac0" fill="none"/><circle cx="20" cy="24" r="4" fill="none" stroke="#803070"/><circle cx="20" cy="24" r="1.600" fill="#803070"/></g>,
  navBook:<g><path d="M1 6h7v18H1z" fill="#f09030" stroke="#a05a10" strokeWidth=".7"/><path d="M8 4h7v20H8z" fill="#3ab040" stroke="#20702a" strokeWidth=".7"/><path d="M15 5l8-4v19l-8 4z" fill="#3a80d8" stroke="#205090" strokeWidth=".7"/></g>,
  navInfo:<g><path d="M12 3c6 0 11 5 11 11M12 7c4 0 7 3 7 7" fill="none" stroke="#2a5ad0" strokeWidth="2"/><circle cx="9" cy="15" r="8" fill="#1a70e0"/><path d="M8 9h3v2H8zM8 12h3v7H8z" fill="#fff"/></g>,
  navWeb:<g><path d="M4 2h12l5 5v17H4z" fill="#fff" stroke="#2a5ad0" strokeWidth="1.2"/><circle cx="12" cy="15" r="6" fill="#5a8a6a"/><path d="M8 11a6 6 0 0 1 8 0l-3 3z" fill="#2aa040"/></g>,
  clock:<g><circle cx="12" cy="12" r="11" fill="#d8e2f0" stroke="#777" strokeWidth="1.4"/><path d="M12 5v7h7" stroke="#111" fill="none" strokeWidth="1.5"/></g>,
  green3d:<g fill="none" stroke="#1a9a50"><path d="M7 1l6 3v7l-6 3-6-3V4z"/><path d="M1 4l6 3 6-3M7 7v7"/><path d="M8 12l6-1" stroke="#e85010" strokeWidth="1.5"/></g>,
  cam:<g><path d="M1 3l10-2 3 10-10 3z" fill="#fff" stroke="#e03010" strokeWidth="1.2"/><circle cx="7" cy="7" r="3" fill="none" stroke="#2030c0"/><circle cx="13" cy="8" r="2" fill="#111"/></g>,
  fopen:<Fold/>,
  csys:<g fill="none"><path d="M2 1v10l10 2M2 11l6-8" stroke="#333"/><path d="M5 5l9 10H4z" stroke="#666"/><path d="M2 1l-1 3" stroke="#2040d0" strokeWidth="1.4"/><path d="M9 6l5-3" stroke="#20a030" strokeWidth="1.2"/><path d="M10 12l4 1" stroke="#e03020" strokeWidth="1.2"/></g>,
  sketch:<g fill="none" stroke="#111"><path d="M1 1h6v6H1zM1 9h6v6H1zM9 9h6v6H9z"/><path d="M9 5l5-4 1 1-5 4z" fill="#f0a020" stroke="#c07010"/></g>,
  ext:<g stroke="#a05a10" strokeWidth=".6"><path d="M1 3l5-2h6l3 2v10l-3 2-4-1-4 1-3-2z" fill="#f5a23c"/><path d="M5 2v11M10 2v12" stroke="#2a3a90"/></g>,
};

const Icon = ({n,s=24,vb=24}) => <svg width={s} height={s} viewBox={`0 0 ${vb} ${vb}`} fill="none" style={{overflow:'visible'}}>{I[n]}</svg>;

const g = w=>({t:'g',w}), b=(n,w=31,s=24)=>({t:'b',n,w,s}), c={t:'c'}, sp=w=>({t:'s',w}), st=(w=12)=>({t:'st',w});
const lab=(x,w,col)=>({t:'l',x,w,col});

const rows = [
  {h:35,bg:'linear-gradient(#e2e2e2,#d8d8d8)',groups:[
    [170,[g(10),b('globe',24),lab('启动',28),c,b('doc'),b('open'),b('save')]],
    [100,[sp(2.5),b('scissors',31.5),b('copy',31.5),b('paste',31.5)]],
    [78,[sp(1.5),b('undo'),c,b('redo')]],
    [50,[sp(3.5),b('foldg'),c]],
    [34,[sp(1.5),b('info')]],
    [135,[sp(8),{t:'search'},sp(2),c]],
    [257,[g(7.5),b('fit'),c,b('shade'),c,b('cube'),c,b('clipo',29.5),b('clipb',27),sp(6),c,b('black'),c]],
    [79,[sp(.5),b('thru'),b('thru2'),sp(2),c]],
    [85,[g(8.5),b('laylist'),b('triad'),c]],
    [67,[sp(1.5),b('hand'),b('palette')]],
    [91,[sp(1.5),b('antenna'),sp(2),c,b('ruler'),c]],
  ]},
  {h:34,bg:'linear-gradient(#e0e0e0,#d6d6d6)',groups:[
    [238,[g(7),b('plane'),c,b('extrude'),b('revolve'),b('hole'),b('boss'),b('sweep'),b('shell')]],
    [329,[sp(2.5),b('offset',31.6),b('dots',31.6),b('cubes',31.6),b('trim',31.6),b('unite',31.6),{t:'c',w:8},sp(3),b('dashbox'),b('cut'),b('slash'),b('shell2'),b('surf2')]],
    [131,[sp(3.5),b('cubeshade'),b('curl'),b('boxtop'),sp(20),st()]],
    [352,[g(9.5),b('pmove'),c,b('pdelta'),c,b('px'),b('pcopy'),c,b('psplit'),c,b('pdim'),c,b('pxf'),b('ptri'),sp(20.5),st()]],
    [250,[g(7.5),b('s1'),b('s2'),b('s3'),b('s4'),b('s5'),b('s6'),b('s7'),sp(1.5),c,{t:'c',w:10}]],
  ]},
  {h:34,bg:'linear-gradient(#d6d6d6,#dadada)',groups:[
    [102,[g(7),b('nodes'),b('layers'),b('laylist')]],
    [38,[sp(1.5),b('tag')]],
    [99,[sp(1.5),b('chka'),b('chkb'),b('chkc')]],
    [48,[sp(1.5),b('abc'),c]],
    [114,[g(7.5),b('ang1'),b('ang2'),b('handi'),c]],
    [105,[g(9.5),b('coil'),b('spring'),b('nut')]],
    [47,[sp(.5),b('xspring'),c]],
    [198,[g(8.5),b('tri'),b('table'),b('fpts'),b('fcir'),b('note'),b('brush')]],
    [47,[sp(3.5),b('bino'),c]],
    [84,[g(9),b('lock1'),b('lock2'),c]],
  ]},
  {h:34,bg:'linear-gradient(#e8e8e8,#d0d0d0)',groups:[
    [52,[g(9.5),b('purpose'),st(8.5)]],
    [41,[g(7.5),b('corner')]],
    [348,[sp(3.5),{t:'dims'}]],
    [68,[sp(.5),b('rad1'),b('rad2')]],
    [110,[sp(1.5),b('dia1'),b('dia2'),b('teal'),c]],
    [447,[g(8.5),b('newsk'),b('flag',30.5),lab('完成草图',52,'#9a9a9a'),b('profile'),b('line'),b('arc'),b('circle'),b('fillet',31,22),b('chamfer',31,22),b('rect'),b('poly'),b('plus',31,20),b('heart',31,21),sp(.5),c]],
    [99,[sp(.5),b('t1',31.5),b('t2',31.5),b('t3',31.5)]],
    [49,[sp(1.5),b('bolt'),c]],
    [88,[sp(1.5),b('paral'),b('brack'),sp(8),st()]],
  ]},
];

const DimCells = () => (<>
  <Dim>1.00</Dim>
  <Dim>1.00<DimSub>±.05</DimSub></Dim>
  <Dim>1.00<DimSub>+.05</DimSub><DimSub>−.02</DimSub></Dim>
  <Dim>1.00<DimSub>+.05</DimSub><DimSub $c="#9a9a9a">−.00</DimSub></Dim>
  <Dim>1.00<DimSub $c="#9a9a9a">+.00</DimSub><DimSub>−.02</DimSub></Dim>
  <Dim><DimBox>1.00</DimBox></Dim>
  <Dim $c="#8a1c1c"><DimSmall>(1.00)</DimSmall></Dim>
  <Dim $c="#1414b0"><DimSmall>10H7</DimSmall></Dim>
  <Dim $c="#1414b0"><DimSmall>10H7</DimSmall><DimSub $thin $c="#1414b0">(10.01</DimSub><DimSub $thin $c="#1414b0">(10</DimSub></Dim>
  <Dim $c="#1414b0"><DimSmall>10H7</DimSmall><DimSub $thin $c="#1414b0">(0.015</DimSub><DimSub $thin $c="#1414b0">(0</DimSub></Dim>
  <Dim $c="#1414b0"><DimSmall>10</DimSmall><DimSub $thin $c="#1414b0">(0.015</DimSub><DimSub $thin $c="#1414b0">(0</DimSub></Dim>
</>);

const Item = ({it}) => {
  switch(it.t){
    case 'g': return <Grip $w={it.w}/>;
    case 'b': return <Btn $w={it.w}><Icon n={it.n} s={it.s}/></Btn>;
    case 'c': return <Caret $w={it.w}/>;
    case 's': return <Space $w={it.w}/>;
    case 'st': return <Stack $w={it.w}>»</Stack>;
    case 'l': return <Label $w={it.w} $c={it.col}>{it.x}</Label>;
    case 'dims': return <DimCells/>;
    case 'search': return <Search>查找命令<svg width="18" height="18" viewBox="0 0 18 18" fill="none"><circle cx="11" cy="6" r="4.500" stroke="#555" strokeWidth="1.4"/><path d="M8 10l-5 5" stroke="#555" strokeWidth="2.2"/></svg></Search>;
    default: return null;
  }
};

const Toolbar = ({h,bg,groups}) => (
  <Row $h={h} $bg={bg}>
    {groups.map(([w,items],i)=>(<Group key={i} $w={w}>{items.map((it,j)=><Item key={j} it={it}/>)}</Group>))}
  </Row>
);

const menu = [['文件','F'],['编辑','E'],['视图','V'],['插入','S'],['格式','R'],['工具','T'],['装配','A'],['信息','I'],['分析','L'],['首选项','P',53,27],['窗口','O',41,15],['工具箱','G',48,15,'GC'],['帮助','H',41,12]];

const Row5 = () => (
  <Row $h={29} $bg="linear-gradient(#b4b4b4 0,#cfcfcf 6px,#dcdcdc 100%)" $top="#c0c0c0" $bot="#bdbdbd">
    <Group $w={276}><Sel $w={113} $ml={5}>没有选择过滤器<SelBtn/></Sel><Sel $w={118} $ml={9}>整个装配<SelBtn/></Sel><Space $w={3}/><Btn $w={28}><Icon n="chain" s={21}/></Btn></Group>
    <Group $w={107}><Space $w={5}/><Btn $w={20}><Icon n="f1" s={19}/></Btn><Btn $w={18}><RedBox><Icon n="f2" s={14}/></RedBox></Btn><Space $w={3}/><Caret/><Btn $w={20}><Icon n="f3" s={19}/></Btn><Space $w={7}/><Btn $w={20}><Icon n="f4" s={19}/></Btn></Group>
    <Group $w={41}><Space $w={5}/><Btn $w={20}><Icon n="selrect" s={19}/></Btn><Space $w={1}/><Caret/></Group>
    <Group $w={54}><Space $w={3}/><Btn $w={20}><Icon n="cylw" s={18}/></Btn><Space $w={3}/><Btn $w={20}><Icon n="cubered" s={19}/></Btn></Group>
    <Group $w={257}>
      <Space $w={.5}/>
      <Box $box><Icon n="sn1" s={18} vb={20}/></Box><Box $box><Icon n="sn2" s={18} vb={20}/></Box><Box $box><Icon n="sn3" s={18} vb={20}/></Box><Box><Icon n="sn4" s={18} vb={20}/></Box>
      <Box $box><Icon n="sn5" s={18} vb={20}/></Box><Box><Icon n="sn6" s={18} vb={20}/></Box><Box $box><Icon n="sn7" s={18} vb={20}/></Box><Box><Icon n="sn8" s={18} vb={22}/></Box>
      <Box $box><Icon n="sn9" s={18} vb={20}/></Box><Box $box><Icon n="sn10" s={18} vb={20}/></Box><Box><Icon n="sn11" s={18}/></Box>
    </Group>
    <Group $w={24} $open><Space $w={1}/><Box><Icon n="grid" s={15} vb={16}/></Box></Group>
    <Stretch><Caret $w={10}/></Stretch>
  </Row>
);

const lines = {
  first:<><path d="M9 10H18M9 10V20" stroke="#999" strokeDasharray="1 1"/></>,
  plus:<><path d="M9 0V20M9 10H18" stroke="#999" strokeDasharray="1 1"/><rect x="4.500" y="5.500" width="9" height="9" fill="#fff" stroke="#888"/><path d="M6.500 10h5M9 7.500v5" stroke="#222"/></>,
  minus:<><path d="M9 0V6M13 10H18" stroke="#999" strokeDasharray="1 1"/><rect x="4.500" y="5.500" width="9" height="9" fill="#fff" stroke="#888"/><path d="M6.500 10h5" stroke="#222"/></>,
  branch:<path d="M28 0V20M28 10H36" stroke="#999" strokeDasharray="1 1"/>,
  end:<path d="M28 0V10H36" stroke="#999" strokeDasharray="1 1"/>,
};
const TreeLines = ({k,w=20}) => <svg width={w} height="20" fill="none" style={{flex:'none'}}>{lines[k]}</svg>;
const TIcon = styled.span`flex:none;width:${p=>p.$w}px;height:16px;display:flex;align-items:center;justify-content:center;margin-left:${p=>p.$ml||0}px;`;
const CheckBox = styled.span`flex:none;width:12px;height:12px;border:1.5px solid #111;background:#fff;margin-left:4px;display:flex;align-items:center;justify-content:center;`;
const TText = styled.span`margin-left:${p=>p.$ml||4}px;`;
const Ck = () => <svg width="11" height="11" viewBox="0 0 14 14"><Check/></svg>;
const TI = ({n,s=15}) => <svg width={s} height={s} viewBox="0 0 16 16" fill="none" style={{overflow:'visible'}}>{I[n]}</svg>;

const Tree = () => (
  <TreeRows>
    <TreeRow><TreeLines k="first"/><TIcon $w={16}><Icon n="clock" s={15}/></TIcon><TText $ml={2}>历史记录模式</TText></TreeRow>
    <TreeRow $alt><TreeLines k="plus"/><TIcon $w={16}><TI n="green3d"/></TIcon><TText $ml={2}>模型视图</TText></TreeRow>
    <TreeRow><TreeLines k="plus"/><TIcon $w={16}><Ck/></TIcon><TIcon $w={16}><TI n="cam"/></TIcon><TText $ml={2}>摄像机</TText></TreeRow>
    <TreeRow $alt><TreeLines k="minus"/><TIcon $w={16}><Icon n="fopen" s={15}/></TIcon><TText $ml={2}>模型历史记录</TText></TreeRow>
    <TreeRow><TreeLines k="branch" w={36}/><CheckBox><Ck/></CheckBox><TIcon $w={17} $ml={2}><TI n="csys"/></TIcon><TText $ml={2}>基准坐标系</TText><Mono>(0)</Mono></TreeRow>
    <TreeRow $alt><TreeLines k="branch" w={36}/><CheckBox><Ck/></CheckBox><TIcon $w={17} $ml={2}><TI n="sketch"/></TIcon><TText $ml={2}>草图</TText><Mono>(1) "SKETCH_...</Mono></TreeRow>
    <TreeRow $bold><TreeLines k="end" w={36}/><CheckBox><Ck/></CheckBox><TIcon $w={17} $ml={2}><TI n="ext"/></TIcon><TText $ml={2}>拉伸</TText><Mono $bold>(2)</Mono></TreeRow>
    {Array.from({length:12},(_,i)=><TreeRow key={i} $alt={i%2===0}/>)}
  </TreeRows>
);

const F = "M712 265C720 250 732 242 746 242C763 242 779 256 779 274L778 300C780 318 792 329 808 331L883 337L879 402C872 402 860 401 847 403C818 408 797 432 794 463C793 486 805 505 822 516C838 527 848 545 848 563C848 585 836 605 820 616C790 626 755 634 720 637C690 637 671 610 671 580C671 560 680 545 693 535C700 528 703 521 703 512C703 500 698 493 693 488C678 475 661 455 661 423C661 400 668 385 673 370Z";
const B = "M746 242C755 241 760 243 765 243C783 243 797 255 797 274L797 296C798 312 808 328 825 330L902 338L897 403L853 403C830 410 815 430 813 455C812 480 822 498 840 517C856 530 867 548 867 567C867 590 855 608 837 617C800 627 770 635 725 637Z";
const S = "M720 552C745 550 770 545 790 538C810 534 823 548 823 565C823 578 817 588 807 592C785 598 760 605 737 608L720 608C706 607 697 595 697 580C697 565 706 554 720 552Z";

const Part = () => (
  <View viewBox="246 218 1061 450" preserveAspectRatio="none">
    <defs>
      <linearGradient id="bg" gradientUnits="userSpaceOnUse" x1="0" y1="218" x2="0" y2="668">
        <stop offset="0" stopColor="#b3b5b8"/><stop offset=".52" stopColor="#d6d8da"/><stop offset=".85" stopColor="#e5e6e8"/><stop offset="1" stopColor="#e6e7e9"/>
      </linearGradient>
      <linearGradient id="side" gradientUnits="userSpaceOnUse" x1="0" y1="240" x2="0" y2="640">
        <stop offset="0" stopColor="#e08a04"/><stop offset=".1" stopColor="#ffa400"/><stop offset=".22" stopColor="#ffa000"/><stop offset=".41" stopColor="#6e4200"/><stop offset=".58" stopColor="#d88a00"/><stop offset=".7" stopColor="#ffab00"/><stop offset=".8" stopColor="#e99204"/><stop offset=".92" stopColor="#7a4a00"/><stop offset="1" stopColor="#5a3500"/>
      </linearGradient>
      <linearGradient id="wall" x1="0" y1="0" x2="0" y2="1"><stop offset="0" stopColor="#5e3700"/><stop offset=".75" stopColor="#ffa000"/><stop offset="1" stopColor="#ffac00"/></linearGradient>
      <clipPath id="c1"><ellipse cx="745" cy="279" rx="13" ry="14.5"/></clipPath>
      <clipPath id="c2"><ellipse cx="851" cy="367" rx="13" ry="14"/></clipPath>
      <clipPath id="c3"><ellipse cx="738" cy="422" rx="48" ry="50.5"/></clipPath>
      <clipPath id="c4"><path d={S}/></clipPath>
      <path id="slot" d={S}/>
    </defs>
    <path d={B} fill="url(#side)" stroke="#4a6cff" strokeWidth="1.6"/>
    <path d="M883 337L902 338L897 403L879 402Z" fill="#e38a04" stroke="#4a6cff" strokeWidth="1"/>
    <path d={F} fill="#ff9c08" stroke="#444" strokeWidth=".9"/>
    <path d="M778 287L796 288M822 516L840 517M820 616L837 617M883 337L879 402" stroke="#444" strokeWidth=".8"/>
    {[['c1',745,279,13,14.5,764],['c2',851,367,13,14,869],['c3',738,422,48,50.5,756]].map(([id,x,y,rx,ry,bx])=>(
      <g key={id}>
        <ellipse cx={x} cy={y} rx={rx} ry={ry} fill="url(#wall)" stroke="#444" strokeWidth=".9"/>
        <g clipPath={`url(#${id})`}><ellipse cx={bx} cy={y+1} rx={rx} ry={ry} fill="url(#bg)" stroke="#4a6cff" strokeWidth="1.8"/></g>
        <ellipse cx={x} cy={y} rx={rx} ry={ry} fill="none" stroke="#444" strokeWidth=".8"/>
      </g>
    ))}
    <path d={S} fill="url(#wall)" stroke="#444" strokeWidth=".9"/>
    <g clipPath="url(#c4)"><use href="#slot" transform="translate(18 3)" fill="url(#bg)" stroke="#4a6cff" strokeWidth="1.8"/></g>
    <path d={S} fill="none" stroke="#444" strokeWidth=".7"/>
    <g fill="none" strokeWidth="1.1">
      <path d="M742 357L818 363L815 429L773 426" stroke="#d8d4c6"/>
      <path d="M740 357H732L727 423" stroke="#1a1af0"/>
      <path d="M755 380L761 305" stroke="#d8d4c6"/>
      <path d="M755 380L752 428" stroke="#1a1af0"/>
      <path d="M707 422L786 427" stroke="#1a1af0" strokeWidth="1.4"/>
      <path d="M786 427L815 429" stroke="#d8d4c6" strokeWidth="1.4"/>
      <path d="M815 429L864 433" stroke="#1a1af0" strokeWidth="1.4"/>
    </g>
    <path d="M762 293L765 307H758Z" fill="#d8d4c6"/>
    <path d="M875 433L860 429V437Z" fill="#1a1af0"/>
    <circle cx="707" cy="422" r="3.500" fill="#1a1af0"/>
    <text x="877" y="441" fontSize="13" fontFamily="Liberation Sans" fill="#2020e0">X</text>
    <text x="694" y="428" fontSize="13" fontFamily="Liberation Sans" fill="#2020e0">Z</text>
    <text x="758" y="290" fontSize="13" fontFamily="Liberation Sans" fill="#d8d4c6">Y</text>
    <g>
      <path d="M282 606l22 2-1 17-21-1z" fill="#c8cac8" stroke="#aaa"/>
      <path d="M290 607l-1 16M297 607l-1 17" stroke="#aaa" fill="none"/>
      <ellipse cx="287" cy="625" rx="4" ry="2" fill="#777"/>
      <path d="M289 624V600" stroke="#5aa86a" strokeWidth="1.3"/><path d="M289 595l-2.500 7h5z" fill="#1a8a3a"/>
      <path d="M289 624l22 1.500" stroke="#c86a6a" strokeWidth="1.3"/><path d="M313 625.500l-7-2.500v5z" fill="#d82020"/>
      <path d="M287 624l-6-.5" stroke="#2040e0" strokeWidth="1.5"/><circle cx="280" cy="623" r="1.800" fill="#2040e0"/>
      <text x="285" y="594" fontSize="11" fontFamily="Liberation Sans" fill="#1a8a3a">Y</text>
      <text x="314" y="630" fontSize="11" fontFamily="Liberation Sans" fill="#d82020">X</text>
      <text x="271" y="626" fontSize="11" fontFamily="Liberation Sans" fill="#2040e0">Z</text>
    </g>
  </View>
);

const Hex = () => (
  <svg width="72" height="84" viewBox="0 0 72 84" fill="none" style={{flex:'none'}}>
    <path d="M36 1L71 21V62L36 82L1 62V21Z" fill="#acdcf6"/>
    <path d="M36 1L53 11C58 22 60 30 58 45L47 28L36 22C30 18 26 12 18 11Z" fill="#cbe8f7"/>
    <path d="M53 11L71 21V62C66 55 62 52 58 50C60 35 58 22 53 11Z" fill="#86cff2"/>
    <path d="M71 62L36 82L18 72L48 56C56 56 64 58 71 62Z" fill="#74c5ec" opacity=".95"/>
    <path d="M18 72L1 62V21C6 28 10 34 14 38L16 56C16 62 17 67 18 72Z" fill="#b2dff6"/>
    <path d="M36 15L59 28V54L36 67L13 54V28Z" fill="#e4e6e8"/>
    <path d="M36 22L52 31L36 40L20 31Z" fill="#bfe2f7"/>
    <path d="M20 31L36 40V56L20 47Z" fill="#9ad5f3"/>
    <path d="M36 40L52 31V47L36 56Z" fill="#7cc9ef"/>
    <path d="M36 1C44 8 50 18 51 27M71 21C62 22 56 26 59 30M71 62C62 56 52 54 46 60M36 82C28 76 22 68 22 60M1 62C8 54 12 46 12 40M1 21C10 18 20 18 26 22" stroke="#eef6fb" strokeWidth=".8"/>
  </svg>
);

export default function App(){
  return (
    <Win>
      <Global/>
      <svg width="0" height="0" style={{position:'absolute'}}><defs>
        <linearGradient id="pl" x1="0" y1="0" x2="1" y2="1"><stop offset="0" stopColor="#f4fbf2"/><stop offset="1" stopColor="#c8d8c4"/></linearGradient>
        <linearGradient id="gy" x1="0" y1="0" x2="1" y2="0"><stop offset="0" stopColor="#b8e090"/><stop offset="1" stopColor="#f09040"/></linearGradient>
      </defs></svg>
      <TitleBar>
        <svg width="16" height="16" viewBox="0 0 24 24" fill="none">{I.globe}</svg>
        <TitleText>NX 10 - 建模 - [_model3.prt]</TitleText>
        <Brand>SIEMENS</Brand>
        <WinBtn><svg width="10" height="10"><path d="M1 8h7" stroke="#fff" strokeWidth="2.4"/></svg></WinBtn>
        <WinBtn><svg width="12" height="11"><path d="M1 1.500h10v9H1z" stroke="#fff" strokeWidth="1.4" fill="none"/></svg></WinBtn>
        <WinBtn $close><svg width="12" height="12"><path d="M1 1l10 10M11 1L1 11" stroke="#fff" strokeWidth="2.2"/></svg></WinBtn>
      </TitleBar>
      <Frame>
        <MenuBar>
          <MenuGrip/>
          <MenuIcon><svg width="15" height="16" viewBox="0 0 22 22" fill="none"><Cube x={1} y={0} t="#6aa0e8" l="#3a70d0" r="#1a40a0"/></svg></MenuIcon>
          {menu.map(([t,k,w,ml,pre],i)=><MenuItem key={t} $w={w} $ml={i===0?0:ml}>{pre&&<Key>{pre}</Key>}{t}{!pre&&<Key>({k})</Key>}</MenuItem>)}
          <MdiBtns>
            <MdiBtn><svg width="10" height="10"><path d="M1 8h7" stroke="#666" strokeWidth="1.8"/></svg></MdiBtn>
            <MdiBtn><svg width="10" height="10" fill="none" stroke="#555"><path d="M.5 3.500h6v6h-6zM3 3V1h6v6H7"/></svg></MdiBtn>
            <MdiBtn><svg width="10" height="10"><path d="M1 1l8 8M9 1L1 9" stroke="#666" strokeWidth="1.8"/></svg></MdiBtn>
          </MdiBtns>
        </MenuBar>
        {rows.map((r,i)=><Toolbar key={i} {...r}/>)}
        <Row5/>
        <Main>
          <Rail>
            <Gear><svg width="16" height="18" viewBox="0 0 16 16" fill="none"><circle cx="8" cy="8" r="4" stroke="#222" strokeWidth="1.6"/><circle cx="8" cy="8" r="6" stroke="#222" strokeWidth="1.6" strokeDasharray="2 2.7"/></svg></Gear>
            <Tab $mt={20}><Icon n="navAsm" s={22} vb={30}/></Tab>
            <Tab $mt={2}><Icon n="navCon" s={22} vb={27}/></Tab>
            <Tab $active $h={43}><Icon n="navPart" s={24} vb={30}/></Tab>
            <Tab $mt={1}><Icon n="navBook" s={24}/></Tab>
            <Tab $mt={12} $h={41}><Icon n="navInfo" s={24}/></Tab>
            <Tab $mt={14}><Icon n="navWeb" s={24}/></Tab>
            <Tab $mt={15}><Icon n="clock" s={23}/></Tab>
            <Notch/>
            <ScrollBtn $mt={2}><svg width="9" height="9"><path d="M1 1h7M4.500 2L8 7H1z" stroke="#aaa" fill="#aaa"/></svg></ScrollBtn>
            <ScrollBtn><svg width="9" height="9"><path d="M4.500 1L8 7H1z" fill="#aaa"/></svg></ScrollBtn>
            <ScrollBtn><svg width="9" height="9"><path d="M4.500 7L8 1H1z" fill="#444"/></svg></ScrollBtn>
            <ScrollBtn><svg width="9" height="9"><path d="M1 8h7M4.500 6L8 1H1z" stroke="#444" fill="#444"/></svg></ScrollBtn>
          </Rail>
          <Panel>
            <PanelHead>部件导航器<MaxBox/></PanelHead>
            <TreeBox>
              <TreeHead>名称<svg width="11" height="6"><path d="M5.500 0L11 6H0z" fill="#111"/></svg></TreeHead>
              <Tree/>
              <HBar><Tri/><Thumb>III</Thumb><Tri $r/></HBar>
            </TreeBox>
            <Sash><SashLine $w={76}/><SashGrip/><SashLine $w={76}/></Sash>
          </Panel>
          <Canvas><Part/></Canvas>
        </Main>
        <Status>
          <StatusCell $w={20}/>
          <StatusCell $w={76}><Icon n="flag" s={15}/><svg width="15" height="15" viewBox="0 0 15 15" fill="none"><path d="M1 4V1h3M11 1h3v3M14 11v3h-3M4 14H1v-3" stroke="#777"/><rect x="3" y="3" width="9" height="9" fill="#4a8ae0" stroke="#223"/></svg></StatusCell>
          <StatusEnd/>
        </Status>
      </Frame>
      <Bottom><BottomEdge/></Bottom>
      <WaterMark>
        <Hex/>
        <WaterText><WaterBig>3D世界网</WaterBig><WaterSmall>WWW.3DSJW.COM</WaterSmall></WaterText>
      </WaterMark>
    </Win>
  );
}
